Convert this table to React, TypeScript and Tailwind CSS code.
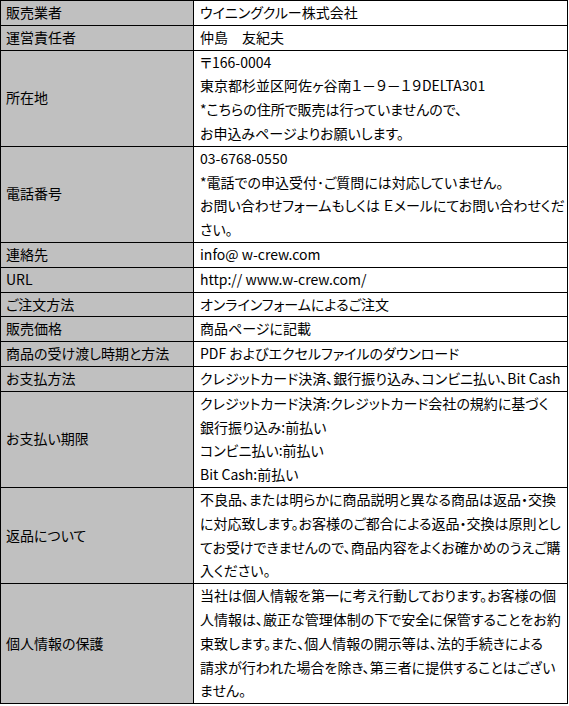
import React from "react";

interface Row {
  label: string;
  lines: string[];
}

const rows: Row[] = [
  { label: "販売業者", lines: ["ウイニングクルー株式会社"] },
  { label: "運営責任者", lines: ["仲島　友紀夫"] },
  {
    label: "所在地",
    lines: [
      "〒166-0004",
      "東京都杉並区阿佐ヶ谷南１－９－１９DELTA301",
      "*こちらの住所で販売は行っていませんので、",
      "お申込みページよりお願いします。",
    ],
  },
  {
    label: "電話番号",
    lines: [
      "03-6768-0550",
      "*電話での申込受付･ご質問には対応していません。",
      "お問い合わせフォームもしくは Ｅメールにてお問い合わせくだ",
      "さい。",
    ],
  },
  { label: "連絡先", lines: ["info@ w-crew.com"] },
  { label: "URL", lines: ["http:// www.w-crew.com/"] },
  { label: "ご注文方法", lines: ["オンラインフォームによるご注文"] },
  { label: "販売価格", lines: ["商品ページに記載"] },
  { label: "商品の受け渡し時期と方法", lines: ["PDF およびエクセルファイルのダウンロード"] },
  { label: "お支払方法", lines: ["クレジットカード決済、銀行振り込み、コンビニ払い、Bit Cash"] },
  {
    label: "お支払い期限",
    lines: [
      "クレジットカード決済:クレジットカード会社の規約に基づく",
      "銀行振り込み:前払い",
      "コンビニ払い:前払い",
      "Bit Cash:前払い",
    ],
  },
  {
    label: "返品について",
    lines: [
      "不良品、または明らかに商品説明と異なる商品は返品・交換",
      "に対応致します。お客様のご都合による返品・交換は原則とし",
      "てお受けできませんので、商品内容をよくお確かめのうえご購",
      "入ください。",
    ],
  },
  {
    label: "個人情報の保護",
    lines: [
      "当社は個人情報を第一に考え行動しております。お客様の個",
      "人情報は、厳正な管理体制の下で安全に保管することをお約",
      "束致します。また、個人情報の開示等は、法的手続きによる",
      "請求が行われた場合を除き、第三者に提供することはござい",
      "ません。",
    ],
  },
];

export default function App() {
  return (
    <div className="w-[568px] bg-white font-['Noto_Sans_CJK_JP',sans-serif] text-[14px] leading-[23.8px] text-black [font-feature-settings:'palt']">
      <table className="w-full border-collapse border border-black">
        <tbody>
          {rows.map((row) => (
            <tr key={row.label}>
              <td className="w-[193px] border border-black bg-[#c0c0c0] px-[5px] py-0 align-middle whitespace-nowrap">
                {row.label}
              </td>
              <td className="border border-black bg-white pl-[6px] pr-0 py-0 align-top">
                {row.lines.map((line, i) => (
                  <div key={i} className="whitespace-nowrap">
                    {line}
                  </div>
                ))}
              </td>
            </tr>
          ))}
        </tbody>
      </table>
    </div>
  );
}
